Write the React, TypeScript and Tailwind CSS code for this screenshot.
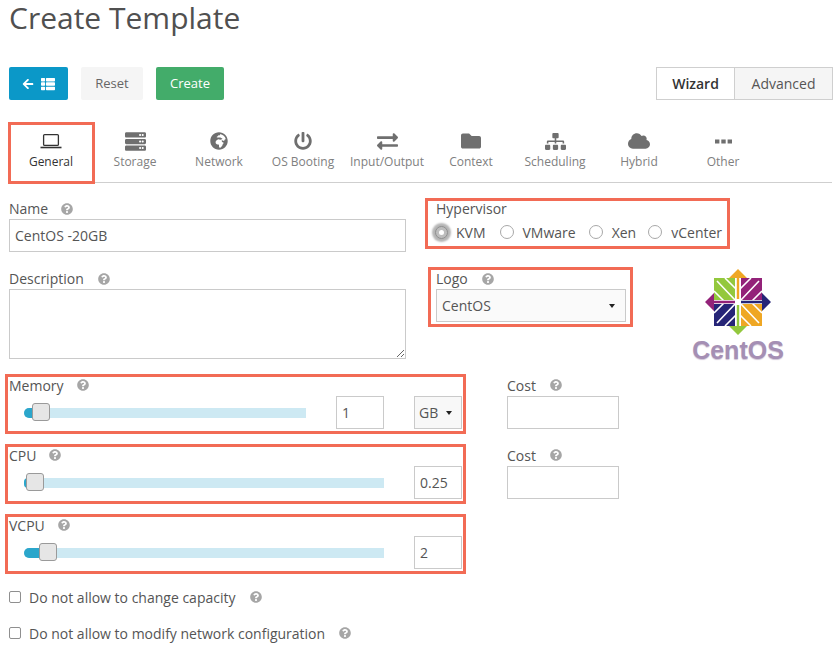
import React from "react";
import { FaArrowLeft, FaCloud, FaExchangeAlt, FaFolder, FaGlobeAfrica, FaPowerOff, FaQuestionCircle, FaServer, FaSitemap, FaThList } from "react-icons/fa";

const Help = ({ className = "" }: { className?: string }) => (
  <FaQuestionCircle className={"inline-block text-[12px] text-[#a6a6a6] " + className} />
);

const Laptop = () => (
  <svg width="22" height="18" viewBox="0 0 22 18" fill="none" stroke="#333" strokeWidth="1.3">
    <rect x="3.6" y="2.6" width="14.8" height="10.8" rx="1" />
    <path d="M0.5 15.5h21" strokeWidth="1.6" />
  </svg>
);

const Dots = () => (
  <svg width="17" height="5" viewBox="0 0 17 5" fill="#6f6f6f">
    <rect x="0" y="0.5" width="4.4" height="4" />
    <rect x="6.3" y="0.5" width="4.4" height="4" />
    <rect x="12.6" y="0.5" width="4.4" height="4" />
  </svg>
);

const tabs: { label: string; icon: React.ReactNode }[] = [
  { label: "Storage", icon: <FaServer className="text-[21px]" /> },
  { label: "Network", icon: <FaGlobeAfrica className="text-[18px]" /> },
  { label: "OS Booting", icon: <FaPowerOff className="text-[18px]" /> },
  { label: "Input/Output", icon: <FaExchangeAlt className="text-[21px]" /> },
  { label: "Context", icon: <FaFolder className="text-[20px]" /> },
  { label: "Scheduling", icon: <FaSitemap className="text-[21px]" /> },
  { label: "Hybrid", icon: <FaCloud className="text-[22px]" /> },
  { label: "Other", icon: <Dots /> },
];

const Radio = ({ label, on, className = "" }: { label: string; on?: boolean; className?: string }) => (
  <span className={"flex items-center " + className}>
    {on ? (
      <span className="relative mr-[8px] flex h-[13px] w-[13px] items-center justify-center rounded-full border border-[#8f8f8f] bg-[#bdbdbd] shadow-[0_0_2px_3px_#b5b5b5]">
        <span className="h-[5px] w-[5px] rounded-full bg-white" />
      </span>
    ) : (
      <span className="mr-[9px] h-[14px] w-[14px] rounded-full border border-[#a8a8a8] bg-white" />
    )}
    {label}
  </span>
);

const Box = ({ value, className = "" }: { value: string; className?: string }) => (
  <input
    readOnly
    value={value}
    className={"h-[33px] border border-[#cacaca] bg-white px-[5px] text-[14px] text-[#555] outline-none " + className}
  />
);

const Slider = ({ width, fill, handle }: { width: string; fill: string; handle: string }) => (
  <div className={"relative h-[10px] rounded-l-[5px] bg-[#cde9f3] " + width}>
    <div className={"h-full rounded-l-[5px] bg-[#2ba6cb] " + fill} />
    <div className={"absolute top-[-5px] h-[18px] w-[18px] rounded-[3px] border border-[#9a9a9a] bg-[#e6e6e6] " + handle} />
  </div>
);

const Logo = () => (
  <div className="flex w-[96px] flex-col items-center">
    <svg width="68" height="68" viewBox="0 0 68 68" className="block">
      <rect x="10" y="10" width="21" height="22" fill="#93c83d" />
      <rect x="37" y="10" width="21" height="22" fill="#932279" />
      <rect x="10" y="36" width="21" height="22" fill="#262577" />
      <rect x="37" y="36" width="21" height="22" fill="#efa724" />
      <g stroke="#fff" strokeWidth="1.6" fill="none">
        <path d="M13 13L31 32M10 23L20 33M21 10L32 21" />
        <path d="M55 13L37 32M58 23L48 33M47 10L36 21" />
        <path d="M13 55L31 36M10 45L20 35M21 58L32 47" />
        <path d="M55 55L37 36M58 45L48 35M47 58L36 47" />
      </g>
      <path d="M34 1L43 10H35.2V31H32.8V10H25Z" fill="#efa724" />
      <path d="M67 34L58 43V35.2H37V32.8H58V25Z" fill="#262577" />
      <path d="M34 67L25 58H32.8V37H35.2V58H43Z" fill="#93c83d" />
      <path d="M1 34L10 25V32.8H31V35.2H10V43Z" fill="#932279" />
    </svg>
    <span className="mt-[2px] font-['Liberation_Sans',sans-serif] text-[25px] leading-[25px] font-bold text-[#a58fb4] [text-shadow:0_1px_1px_#cfc4d6]">
      CentOS
    </span>
  </div>
);

const Frame = ({ className = "", children }: { className?: string; children: React.ReactNode }) => (
  <div className={"h-[60px] border-[3px] border-[#f26b55] " + className}>{children}</div>
);

const Cost = () => (
  <div className="ml-[41px] w-[112px]">
    <div className="flex h-[22px] items-center">
      Cost <Help className="ml-[14px]" />
    </div>
    <Box value="" className="w-[112px]" />
  </div>
);

const Caret = ({ className = "" }: { className?: string }) => (
  <span className={"h-0 w-0 border-x-[3px] border-t-[4px] border-x-transparent border-t-[#222] " + className} />
);

export default function App() {
  return (
    <div className="h-[662px] w-[840px] overflow-hidden bg-white font-['Open_Sans',sans-serif] text-[14px] text-[#555]">
      <h1 className="ml-[9px] h-[67px] text-[30px] leading-[36px] font-normal text-[#505050]">Create Template</h1>

      <div className="flex h-[33px] items-stretch pr-[7px] pl-[9px] text-[13px]">
        <div className="flex w-[59px] items-center justify-center gap-[7px] rounded-[2px] bg-[#0b98c8] text-white">
          <FaArrowLeft className="text-[12px]" />
          <FaThList className="text-[14px]" />
        </div>
        <div className="ml-[13px] flex w-[62px] items-center justify-center rounded-[2px] bg-[#f5f5f5] text-[#666]">Reset</div>
        <div className="ml-[13px] flex w-[68px] items-center justify-center rounded-[2px] bg-[#43ac6a] text-white">Create</div>
        <div className="ml-auto flex text-[14px]">
          <div className="flex w-[79px] items-center justify-center border border-[#cfcfcf] bg-white font-semibold text-[#333]">Wizard</div>
          <div className="flex w-[98px] items-center justify-center border border-l-0 border-[#cfcfcf] bg-[#f5f5f5]">Advanced</div>
        </div>
      </div>

      <div className="mt-[22px] ml-[8px] flex h-[61px] w-[824px] border-b border-[#cfcfcf] text-[12px] text-[#777]">
        <div className="flex h-[62px] w-[87px] shrink-0 flex-col items-center border-[3px] border-[#f26b55] bg-white pt-[5px] pr-[1px] text-[#333]">
          <div className="flex h-[22px] items-center"><Laptop /></div>
          <span className="mt-[2px] leading-[16px]">General</span>
        </div>
        <div className="-ml-[2px] flex">
          {tabs.map((t) => (
            <div key={t.label} className="flex w-[84px] shrink-0 flex-col items-center pt-[8px] whitespace-nowrap text-[#808080]">
              <div className="flex h-[22px] items-center text-[#6f6f6f]">{t.icon}</div>
              <span className="mt-[2px] leading-[16px]">{t.label}</span>
            </div>
          ))}
        </div>
      </div>

      <div className="mt-[15px] flex items-start pl-[5px]">
        <div className="w-[420px] pl-[4px]">
          <div className="flex h-[21px] items-center">Name <Help className="ml-[13px]" /></div>
          <Box value="CentOS -20GB" className="block w-[397px]" />
          <div className="mt-[16px] flex h-[21px] items-center">Description <Help className="ml-[14px]" /></div>
          <textarea readOnly className="block h-[70px] w-[397px] border border-[#cacaca] bg-white outline-none" />
        </div>
        <div>
          <Frame className="h-[51px]! w-[305px] pl-[8px]">
            <div className="leading-[16px]">Hypervisor</div>
            <div className="mt-[5px] flex h-[20px] items-center">
              <Radio label="KVM" on className="ml-[-1px]" />
              <Radio label="VMware" className="ml-[14px]" />
              <Radio label="Xen" className="ml-[13px]" />
              <Radio label="vCenter" className="ml-[12px]" />
            </div>
          </Frame>
          <div className="mt-[18px] flex items-start">
            <Frame className="ml-[3px] w-[205px] pl-[5px]">
              <div className="mb-[2px] flex h-[17px] items-center">Logo <Help className="ml-[14px]" /></div>
              <div className="flex h-[33px] w-[190px] items-center justify-between border border-[#cacaca] bg-[#fafafa] pr-[10px] pl-[5px]">
                CentOS
                <Caret />
              </div>
            </Frame>
            <div className="ml-[57px] pt-[1px]"><Logo /></div>
          </div>
        </div>
      </div>

      <div className="mt-[11px] flex items-start pl-[5px]">
        <Frame className="w-[461px] pl-[1px]">
          <div className="mb-[3px] flex h-[16px] items-center">Memory <Help className="ml-[13px]" /></div>
          <div className="flex h-[33px] items-center">
            <div className="ml-[15px]"><Slider width="w-[282px]" fill="w-[10px]" handle="left-[8px]" /></div>
            <Box value="1" className="ml-[30px] w-[48px]" />
            <div className="ml-[30px] flex h-[33px] w-[48px] items-center border border-[#cacaca] bg-[#f8f8f8] pl-[4px]">
              GB<Caret className="ml-[8px]" />
            </div>
          </div>
        </Frame>
        <Cost />
      </div>

      <div className="mt-[10px] flex items-start pl-[5px]">
        <Frame className="w-[461px] pl-[1px]">
          <div className="mb-[3px] flex h-[16px] items-center">CPU <Help className="ml-[13px]" /></div>
          <div className="flex h-[33px] items-center">
            <div className="ml-[15px]"><Slider width="w-[360px]" fill="w-[4px]" handle="left-[2px]" /></div>
            <Box value="0.25" className="ml-[30px] w-[48px]" />
          </div>
        </Frame>
        <Cost />
      </div>

      <div className="mt-[10px] pl-[5px]">
        <Frame className="w-[461px] pl-[1px]">
          <div className="mb-[3px] flex h-[16px] items-center">VCPU <Help className="ml-[13px]" /></div>
          <div className="flex h-[33px] items-center">
            <div className="ml-[15px]"><Slider width="w-[360px]" fill="w-[17px]" handle="left-[15px]" /></div>
            <Box value="2" className="ml-[30px] w-[48px]" />
          </div>
        </Frame>
      </div>

      <div className="mt-[13px] flex h-[20px] items-center pl-[9px]">
        <span className="mr-[8px] h-[12px] w-[12px] rounded-[2px] border border-[#8f8f8f] bg-white" />
        Do not allow to change capacity <Help className="ml-[14px]" />
      </div>
      <div className="mt-[16px] flex h-[20px] items-center pl-[9px]">
        <span className="mr-[8px] h-[12px] w-[12px] rounded-[2px] border border-[#8f8f8f] bg-white" />
        Do not allow to modify network configuration <Help className="ml-[14px]" />
      </div>
    </div>
  );
}
